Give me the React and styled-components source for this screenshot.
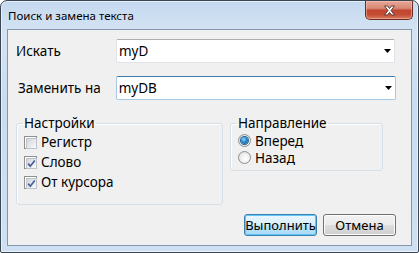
import React from "react";
import styled, { createGlobalStyle } from "styled-components";

const Global = createGlobalStyle`
  html, body { margin: 0; padding: 0; background: #ffffff; }
  body { font-family: "Noto Sans", "Open Sans", sans-serif; }
  * { box-sizing: border-box; }
`;

const Window = styled.div`
  width: 419px;
  height: 253px;
  border: 1px solid #3b4655;
  border-radius: 7px 7px 2px 2px;
  background: linear-gradient(180deg, #c4d9ef 0%, #d4e3f3 12%, #c9dcf0 40%, #cfe0f2 100%);
  display: flex;
  flex-direction: column;
  overflow: hidden;
  box-shadow: inset 0 0 0 1px rgba(255, 255, 255, 0.55);
`;

const TitleBar = styled.div`
  height: 28px;
  display: flex;
  align-items: flex-start;
  justify-content: space-between;
  padding: 0 5px 0 7px;
`;

const Title = styled.div`
  font-family: "Noto Sans", sans-serif;
  font-size: 11.5px;
  line-height: 16px;
  margin-top: 7px;
  color: #000;
`;

const CloseButton = styled.div`
  width: 48px;
  height: 19px;
  border: 1px solid #6b2d24;
  border-top: none;
  border-radius: 0 0 5px 5px;
  background: linear-gradient(180deg, #e8a797 0%, #d88a76 40%, #c0462f 52%, #c44b34 75%, #d97a5c 100%);
  box-shadow: inset 0 0 0 1px rgba(255, 210, 190, 0.45);
  display: flex;
  align-items: center;
  justify-content: center;
`;

const Client = styled.div`
  flex: 1;
  margin: 0 6px 6px 6px;
  border: 1px solid #8496ab;
  background: #f0f0f0;
  padding: 9px 15px 0 8px;
  display: flex;
  flex-direction: column;
`;

const FieldRow = styled.div`
  display: flex;
  align-items: center;
  height: 24px;
  margin-top: ${(p) => p.$top}px;
  padding-left: ${(p) => p.$indent || 0}px;
`;

const FieldLabel = styled.div`
  width: ${(p) => 100 - (p.$indent || 0)}px;
  font-size: 13.5px;
  color: #000;
`;

const Combo = styled.div`
  width: ${(p) => p.$width}px;
  height: 24px;
  background: #fff;
  border: 1px solid ${(p) => (p.$focused ? "#a5c9e4" : "#dfe3e8")};
  border-top-color: ${(p) => (p.$focused ? "#3d7bad" : "#abadb3")};
  border-radius: 2px;
  display: flex;
  align-items: center;
  justify-content: space-between;
  padding: 0 3px 0 2px;
  font-size: 13.5px;
  color: #000;
`;

const Groups = styled.div`
  display: flex;
  align-items: flex-start;
  gap: 7px;
  margin-top: 15px;
`;

const Group = styled.fieldset`
  width: ${(p) => p.$width}px;
  margin: 0;
  padding: 1px 6px ${(p) => p.$bottom}px 6px;
  border: 1px solid #d5dfe5;
  border-radius: 3px;
  box-shadow: inset 1px 1px 0 #ffffff;
`;

const Legend = styled.legend`
  padding: 0 1px;
  font-size: 13.5px;
  line-height: 16px;
  color: #000;
`;

const OptionRow = styled.label`
  display: flex;
  align-items: center;
  height: ${(p) => p.$h}px;
  gap: 4px;
  padding-left: 1px;
  font-size: 13.5px;
  color: #000;
`;

const BoxMark = styled.span`
  width: 13px;
  height: 13px;
  border: 1px solid #8e8f8f;
  background: #fff;
  padding: 1px;
  position: relative;
  flex-shrink: 0;
  &::before {
    content: "";
    display: block;
    width: 100%;
    height: 100%;
    border: 1px solid #bec3cb;
    background: linear-gradient(135deg, #d2d5da 0%, #eaebed 60%, #fbfbfb 100%);
  }
  svg { position: absolute; left: 1px; top: 1px; }
`;

const RadioMark = styled.span`
  width: 13px;
  height: 13px;
  border-radius: 50%;
  border: 1px solid #8e8f8f;
  background: radial-gradient(circle at 60% 60%, #ffffff 0%, #f2f2f2 40%, #d4d6d9 100%);
  display: flex;
  align-items: center;
  justify-content: center;
  flex-shrink: 0;
  &::before {
    content: "";
    display: ${(p) => (p.$checked ? "block" : "none")};
    width: 7px;
    height: 7px;
    border-radius: 50%;
    background: radial-gradient(circle at 40% 35%, #9fdcf8 0%, #2b8fd0 40%, #0b4f93 100%);
    box-shadow: 0 0 0 1px #2a5f92;
  }
`;

const Buttons = styled.div`
  display: flex;
  justify-content: flex-end;
  gap: 6px;
  margin-top: 9px;
`;

const Button = styled.button`
  width: 73px;
  height: 22px;
  padding: 0;
  font-family: "Noto Sans", sans-serif;
  font-size: 13px;
  color: #000;
  border-radius: 3px;
  border: 1px solid ${(p) => (p.$primary ? "#3c7fb1" : "#707070")};
  background: ${(p) =>
    p.$primary
      ? "linear-gradient(180deg, #eaf6fd 0%, #d9f0fc 48%, #bee6fd 52%, #a7d9f5 100%)"
      : "linear-gradient(180deg, #f2f2f2 0%, #ebebeb 48%, #dddddd 52%, #cfcfcf 100%)"};
  box-shadow: inset 0 0 0 1px ${(p) => (p.$primary ? "#62c6f5" : "#fcfcfc")};
`;

function Arrow() {
  return (
    <svg width="7" height="4" viewBox="0 0 7 4">
      <path d="M0 0H7L3.5 4Z" fill="#000" />
    </svg>
  );
}

function Check({ checked }) {
  return (
    <BoxMark>
      {checked && (
        <svg width="11" height="11" viewBox="0 0 11 11">
          <path d="M2.2 5.6L4.3 8.2L8.8 2.4" fill="none" stroke="#4a5f97" strokeWidth="1.7" />
        </svg>
      )}
    </BoxMark>
  );
}

export default function App() {
  return (
    <>
      <Global />
      <Window>
        <TitleBar>
          <Title>Поиск и замена текста</Title>
          <CloseButton>
            <svg width="13" height="11" viewBox="0 0 13 11">
              <path
                d="M1.5 1H4.5L6.5 3.5L8.5 1H11.5L8 5.5L11.5 10H8.5L6.5 7.5L4.5 10H1.5L5 5.5Z"
                fill="#ffffff"
                stroke="#5a3a36"
                strokeWidth="1"
                strokeLinejoin="round"
              />
            </svg>
          </CloseButton>
        </TitleBar>
        <Client>
          <FieldRow $top={0}>
            <FieldLabel>Искать</FieldLabel>
            <Combo $width={279}>
              <span>myD</span>
              <Arrow />
            </Combo>
          </FieldRow>
          <FieldRow $top={13} $indent={2}>
            <FieldLabel $indent={2}>Заменить на</FieldLabel>
            <Combo $width={281} $focused>
              <span>myDB</span>
              <Arrow />
            </Combo>
          </FieldRow>
          <Groups>
            <Group $width={207} $bottom={12}>
              <Legend>Настройки</Legend>
              <OptionRow $h={20}>
                <Check />
                Регистр
              </OptionRow>
              <OptionRow $h={20}>
                <Check checked />
                Слово
              </OptionRow>
              <OptionRow $h={20}>
                <Check checked />
                От курсора
              </OptionRow>
            </Group>
            <Group $width={153} $bottom={4}>
              <Legend>Направление</Legend>
              <OptionRow $h={17}>
                <RadioMark $checked />
                Вперед
              </OptionRow>
              <OptionRow $h={17}>
                <RadioMark />
                Назад
              </OptionRow>
            </Group>
          </Groups>
          <Buttons>
            <Button $primary>Выполнить</Button>
            <Button>Отмена</Button>
          </Buttons>
        </Client>
      </Window>
    </>
  );
}
